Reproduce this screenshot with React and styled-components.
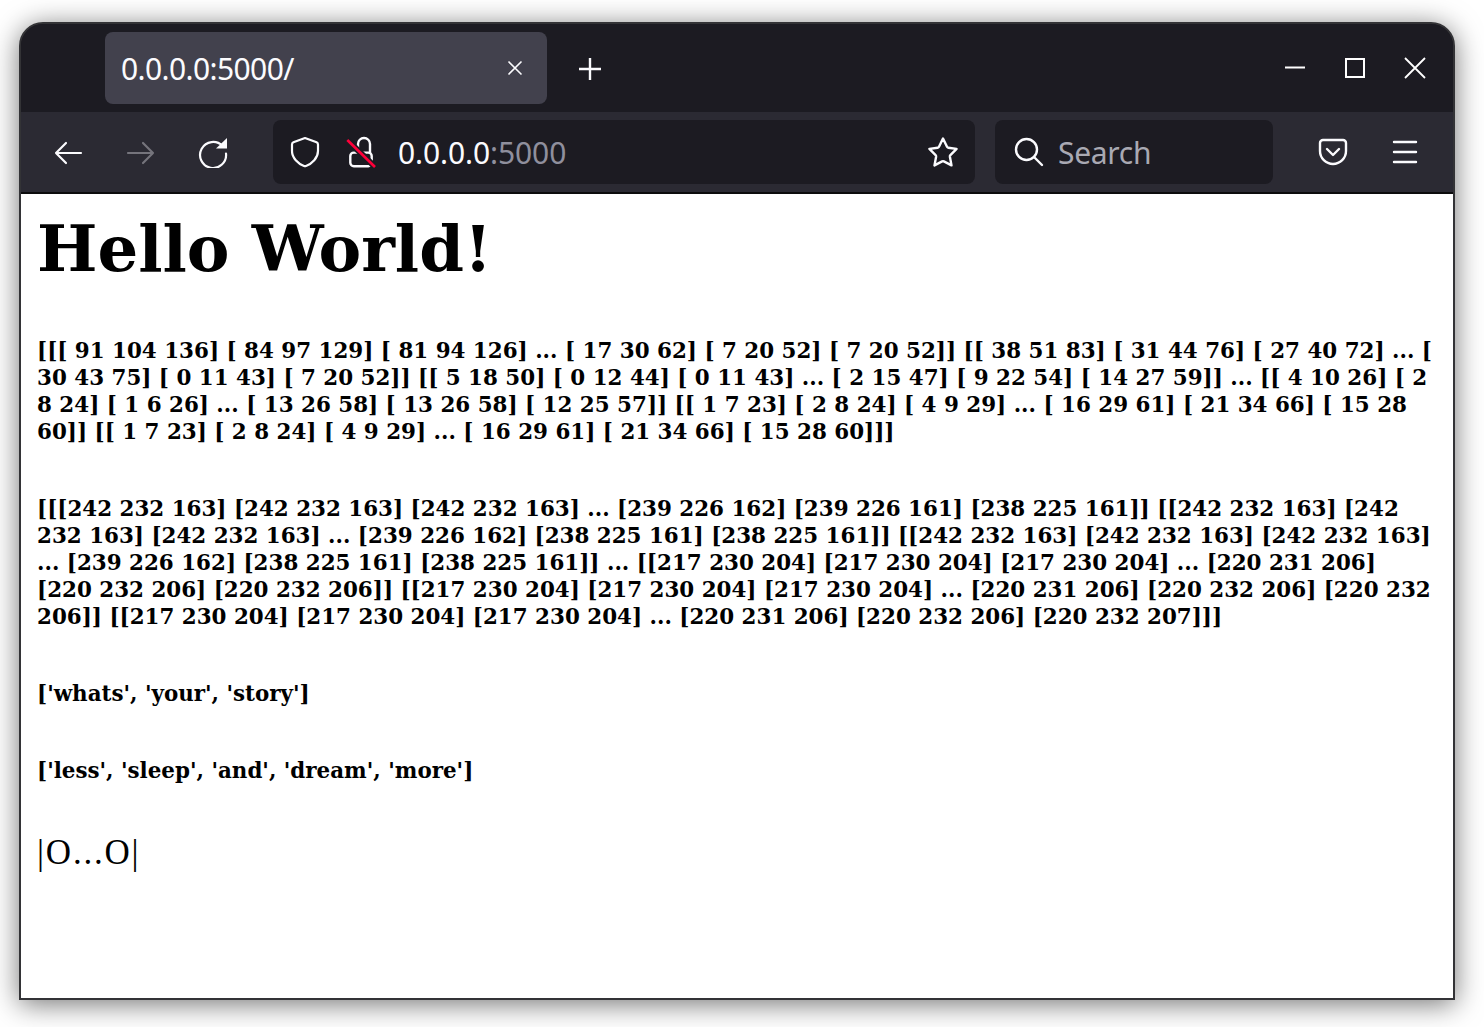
import styled, { createGlobalStyle } from "styled-components";

const GlobalStyle = createGlobalStyle`
	html, body {
		margin: 0;
		padding: 0;
		background: #ffffff;
	}
`;

const matrixOne =
	"[[[ 91 104 136] [ 84 97 129] [ 81 94 126] ... [ 17 30 62] [ 7 20 52] [ 7 20 52]] [[ 38 51 83] [ 31 44 76] [ 27 40 72] ... [ 30 43 75] [ 0 11 43] [ 7 20 52]] [[ 5 18 50] [ 0 12 44] [ 0 11 43] ... [ 2 15 47] [ 9 22 54] [ 14 27 59]] ... [[ 4 10 26] [ 2 8 24] [ 1 6 26] ... [ 13 26 58] [ 13 26 58] [ 12 25 57]] [[ 1 7 23] [ 2 8 24] [ 4 9 29] ... [ 16 29 61] [ 21 34 66] [ 15 28 60]] [[ 1 7 23] [ 2 8 24] [ 4 9 29] ... [ 16 29 61] [ 21 34 66] [ 15 28 60]]]";

const matrixTwo =
	"[[[242 232 163] [242 232 163] [242 232 163] ... [239 226 162] [239 226 161] [238 225 161]] [[242 232 163] [242 232 163] [242 232 163] ... [239 226 162] [238 225 161] [238 225 161]] [[242 232 163] [242 232 163] [242 232 163] ... [239 226 162] [238 225 161] [238 225 161]] ... [[217 230 204] [217 230 204] [217 230 204] ... [220 231 206] [220 232 206] [220 232 206]] [[217 230 204] [217 230 204] [217 230 204] ... [220 231 206] [220 232 206] [220 232 206]] [[217 230 204] [217 230 204] [217 230 204] ... [220 231 206] [220 232 206] [220 232 207]]]";

function Icon({ size = 32, children }) {
	return (
		<svg
			width={size}
			height={size}
			viewBox={`0 0 ${size} ${size}`}
			fill="none"
			stroke="currentColor"
			strokeWidth="2"
			strokeLinecap="round"
			strokeLinejoin="round"
		>
			{children}
		</svg>
	);
}

export default function App() {
	return (
		<>
			<GlobalStyle />
			<Stage>
				<Browser>
					<TabStrip>
						<Tab>
							<TabTitle>0.0.0.0:5000/</TabTitle>
							<TabClose>
								<Icon size={20}>
									<path d="M3.5 3.5L16.5 16.5M16.5 3.5L3.5 16.5" strokeWidth="1.6" strokeLinecap="butt" />
								</Icon>
							</TabClose>
						</Tab>
						<NewTab>
							<Icon size={32}>
								<path d="M16 5V27M5 16H27" strokeWidth="2.4" strokeLinecap="butt" />
							</Icon>
						</NewTab>
						<WindowControls>
							<WindowButton>
								<Icon size={24}>
									<path d="M2 11.5H22" strokeLinecap="butt" />
								</Icon>
							</WindowButton>
							<WindowButton>
								<Icon size={24}>
									<path d="M3 3H21V21H3Z" strokeLinecap="butt" strokeLinejoin="miter" />
								</Icon>
							</WindowButton>
							<WindowButton>
								<Icon size={24}>
									<path d="M2 2L22 22M22 2L2 22" strokeWidth="1.8" strokeLinecap="butt" />
								</Icon>
							</WindowButton>
						</WindowControls>
					</TabStrip>
					<NavBar>
						<NavButton>
							<Icon>
								<path d="M28 17H3M13 7L3 17L13 27" strokeWidth="2.2" />
							</Icon>
						</NavButton>
						<NavButton $disabled>
							<Icon>
								<path d="M3 17H28M18 7L28 17L18 27" strokeWidth="2.2" />
							</Icon>
						</NavButton>
						<NavButton>
							<Icon>
								<path d="M25.5 10A13 13 0 1 0 29 17.5" strokeWidth="2.2" />
								<path d="M19 12.5H30V2Z" fill="currentColor" stroke="none" />
							</Icon>
						</NavButton>
						<UrlBar>
							<ShieldSlot>
								<Icon>
									<path d="M16 2L27.6 6.3Q29 6.9 29 8.4V15C29 22 23 27.6 17 30Q16 30.4 15 30C9 27.6 3 22 3 15V8.4Q3 6.9 4.4 6.3Z" strokeWidth="2.2" />
								</Icon>
							</ShieldSlot>
							<LockSlot>
								<Icon>
									<path d="M12 14V8A6 6 0 0 1 24 8V17" strokeWidth="2.4" />
									<rect x="4.3" y="16.6" width="21.4" height="13.6" rx="3.5" strokeWidth="2.4" />
									<path d="M1.3 4L29 31" stroke="#1c1b22" strokeWidth="6" strokeLinecap="butt" />
									<path d="M1.3 4L29 31" stroke="#ff0039" strokeWidth="2.6" strokeLinecap="butt" />
								</Icon>
							</LockSlot>
							<UrlText>
								0.0.0.0<UrlPort>:5000</UrlPort>
							</UrlText>
							<Icon>
								<path d="M16 2.5L20 10.8Q20.4 11.6 21.3 11.7L29.6 12.9L23.4 19.2Q22.8 19.8 22.9 20.7L24.5 29.4L16.9 25.4Q16 25 15.1 25.4L7.5 29.4L9.1 20.7Q9.2 19.8 8.6 19.2L2.4 12.9L10.7 11.7Q11.6 11.6 12 10.8Z" strokeWidth="2.4" />
							</Icon>
						</UrlBar>
						<SearchBar>
							<Icon>
								<circle cx="13.5" cy="13.5" r="10.5" strokeWidth="2.4" />
								<path d="M21 21L29 29" strokeWidth="2.4" />
							</Icon>
							<SearchText>Search</SearchText>
						</SearchBar>
						<ToolButtons>
							<NavButton>
								<Icon>
									<path d="M6 4H26A3 3 0 0 1 29 7V15A13 13 0 0 1 3 15V7A3 3 0 0 1 6 4Z" strokeWidth="2.4" />
									<path d="M10 13L16 19L22 13" strokeWidth="2.4" />
								</Icon>
							</NavButton>
							<NavButton>
								<Icon>
									<path d="M5 6H27M5 16H27M5 26H27" strokeWidth="2.4" />
								</Icon>
							</NavButton>
						</ToolButtons>
					</NavBar>
					<Page>
						<Heading>Hello World!</Heading>
						<DataLine>{matrixOne}</DataLine>
						<DataLine>{matrixTwo}</DataLine>
						<DataLine>['whats', 'your', 'story']</DataLine>
						<DataLine>['less', 'sleep', 'and', 'dream', 'more']</DataLine>
						<PlainLine>|O...O|</PlainLine>
					</Page>
				</Browser>
			</Stage>
		</>
	);
}

const Stage = styled.div`
	width: 1484px;
	height: 1027px;
	padding: 22px 29px 27px 19px;
	box-sizing: border-box;
	overflow: hidden;
	background: #ffffff;
`;

const Browser = styled.div`
	width: 1436px;
	height: 978px;
	display: flex;
	flex-direction: column;
	box-sizing: border-box;
	border: 2px solid #333336;
	border-radius: 24px 24px 0 0;
	overflow: hidden;
	background: #1c1b22;
	box-shadow: 0 4px 28px rgba(0, 0, 0, 0.55);
`;

const TabStrip = styled.div`
	height: 88px;
	flex: none;
	display: flex;
	align-items: flex-start;
	box-sizing: border-box;
	padding: 8px 0 0 84px;
	background: #1c1b22;
`;

const Tab = styled.div`
	width: 442px;
	height: 72px;
	display: flex;
	align-items: center;
	justify-content: space-between;
	box-sizing: border-box;
	padding: 0 22px 0 16px;
	border-radius: 8px;
	background: #42414d;
	color: #fbfbfe;
`;

const TabTitle = styled.span`
	font: 30px "Noto Sans", sans-serif;
	letter-spacing: -0.6px;
`;

const TabClose = styled.span`
	display: flex;
	color: #fbfbfe;
`;

const NewTab = styled.div`
	display: flex;
	margin: 21px 0 0 27px;
	color: #fbfbfe;
`;

const WindowControls = styled.div`
	margin: 24px 0 0 auto;
	padding-right: 26px;
	display: flex;
	gap: 36px;
	color: #ffffff;
`;

const WindowButton = styled.div`
	display: flex;
`;

const NavBar = styled.div`
	height: 80px;
	flex: none;
	display: flex;
	align-items: center;
	box-sizing: border-box;
	padding: 0 16px;
	gap: 8px;
	background: #2b2a33;
`;

const NavButton = styled.div`
	width: 64px;
	height: 64px;
	flex: none;
	display: flex;
	align-items: center;
	justify-content: center;
	color: ${(p) => (p.$disabled ? "#75747c" : "#fbfbfe")};
`;

const UrlBar = styled.div`
	width: 702px;
	height: 64px;
	flex: none;
	display: flex;
	align-items: center;
	box-sizing: border-box;
	margin-left: 20px;
	padding: 0 16px;
	border-radius: 8px;
	background: #1c1b22;
	color: #fbfbfe;
`;

const ShieldSlot = styled.span`
	display: flex;
`;

const LockSlot = styled.span`
	display: flex;
	margin-left: 25px;
`;

const UrlText = styled.span`
	flex: 1;
	margin-left: 20px;
	font: 30px "Noto Sans", sans-serif;
	letter-spacing: -0.1px;
	color: #fbfbfe;
`;

const UrlPort = styled.span`
	color: #8f8f9d;
`;

const SearchBar = styled.div`
	width: 278px;
	height: 64px;
	flex: none;
	display: flex;
	align-items: center;
	box-sizing: border-box;
	margin-left: 12px;
	padding-left: 18px;
	gap: 13px;
	border-radius: 8px;
	background: #1c1b22;
	color: #fbfbfe;
`;

const SearchText = styled.span`
	font: 30px "Noto Sans", sans-serif;
	letter-spacing: -0.3px;
	color: #a9a9b3;
`;

const ToolButtons = styled.div`
	display: flex;
	margin-left: 20px;
	gap: 8px;
`;

const Page = styled.div`
	flex: 1;
	box-sizing: border-box;
	padding: 2px 16px 0;
	border-top: 2px solid #0c0c0d;
	background: #ffffff;
	color: #000000;
	font-family: "DejaVu Serif", serif;
`;

const Heading = styled.h1`
	margin: 15px 0 51px;
	font-size: 64px;
	line-height: 75px;
	font-weight: 700;
`;

const DataLine = styled.h3`
	margin: 0 0 50px;
	font-size: 21.42px;
	line-height: 27px;
	font-weight: 700;
`;

const PlainLine = styled.div`
	margin-top: 0;
	font-size: 35px;
	letter-spacing: 1.8px;
	line-height: 38px;
	font-weight: 400;
	font-family: "Liberation Serif", serif;
`;
